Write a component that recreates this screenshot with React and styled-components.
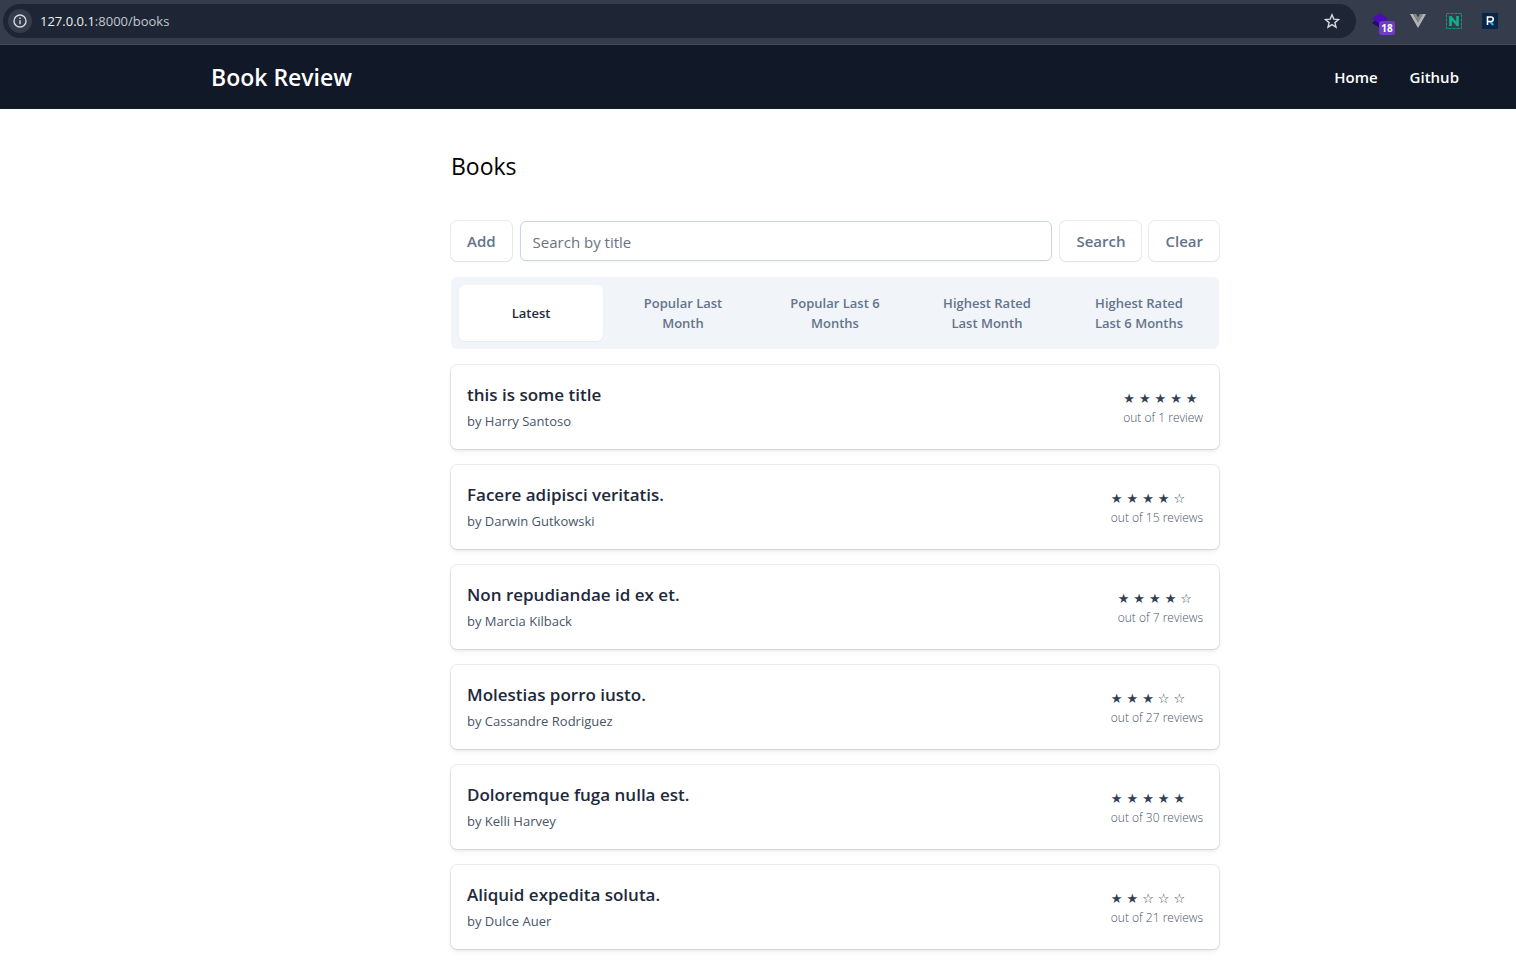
import React from "react";
import styled, { createGlobalStyle } from "styled-components";

const slate = {
  100: "#f1f5f9",
  300: "#cbd5e1",
  500: "#64748b",
  600: "#475569",
  700: "#334155",
  800: "#1e293b",
};

const GlobalStyle = createGlobalStyle`
  *, *::before, *::after { box-sizing: border-box; }
  body {
    margin: 0;
    background: #fff;
    color: #000;
    font-family: "Segoe UI", "Open Sans", "Noto Sans", sans-serif;
    font-size: 15px;
    line-height: 24px;
  }
  h1, h2, p, ul { margin: 0; padding: 0; }
  ul { list-style: none; }
  a { color: inherit; text-decoration: none; }
  button, input { font: inherit; }
`;

const BrowserBar = styled.div`
  display: flex;
  align-items: center;
  height: 45px;
  padding: 0 14px 2px 3px;
  gap: 14px;
  background: #353c4b;
  border-bottom: 1px solid #484b52;
`;

const AddressBar = styled.div`
  flex: 1;
  display: flex;
  align-items: center;
  height: 34px;
  padding: 0 14px 0 5px;
  gap: 8px;
  border-radius: 17px;
  background: #1e2636;
`;

const BarButton = styled.button`
  display: grid;
  place-items: center;
  flex: none;
  width: ${(p) => p.$size}px;
  height: ${(p) => p.$size}px;
  padding: 0;
  border: 0;
  border-radius: 50%;
  background: ${(p) => p.$fill || "transparent"};
  color: #d5d8de;
`;

const Address = styled.span`
  flex: 1;
  color: #c3c7cf;
  font-size: 13px;
  strong { color: #eceef2; font-weight: 400; }
`;

const Extensions = styled.div`
  display: flex;
  align-items: center;
  gap: 12px;
`;

const Extension = styled(BarButton)`
  position: relative;
  border-radius: 0;
`;

const Badge = styled.span`
  position: absolute;
  left: 9px;
  top: 12px;
  width: 16px;
  height: 14px;
  border-radius: 3px;
  background: #6f3cc3;
  color: #fff;
  font-size: 10px;
  font-weight: 700;
  line-height: 14px;
  text-align: center;
`;

const SiteHeader = styled.header`
  padding-left: 154px;
  background: #111827;
  color: #fff;
`;

const HeaderInner = styled.div`
  display: flex;
  align-items: center;
  justify-content: space-between;
  max-width: 1280px;
  height: 64px;
  margin: 0 auto;
  padding: 0 16px;
`;

const Brand = styled.a`
  font-size: 23px;
  font-weight: 600;
  line-height: 32px;
`;

const Nav = styled.nav`
  display: flex;
  gap: 32px;
  font-weight: 600;
`;

const Main = styled.main`
  padding: 40px 0 16px 154px;
`;

const Column = styled.div`
  max-width: 768px;
  margin: 0 auto;
`;

const PageTitle = styled.h1`
  margin-bottom: 38px;
  font-size: 23px;
  font-weight: 400;
  line-height: 34px;
`;

const SearchForm = styled.form`
  display: flex;
  gap: 8px;
  margin-bottom: 16px;
`;

const Button = styled.button`
  height: 40px;
  padding: 0 16px;
  border: 0;
  border-radius: 6px;
  background: #fff;
  box-shadow: 0 0 0 1px rgba(51, 65, 85, 0.1), 0 1px 2px rgba(0, 0, 0, 0.05);
  color: ${slate[500]};
  font-weight: 600;
`;

const SearchInput = styled.input`
  flex: 1;
  min-width: 0;
  height: 40px;
  padding: 2px 12px 0;
  border: 1px solid ${slate[300]};
  border-radius: 6px;
  box-shadow: 0 1px 2px rgba(0, 0, 0, 0.05);
  color: ${slate[700]};
  &::placeholder { color: #6b7280; opacity: 1; }
`;

const Filters = styled.nav`
  display: grid;
  grid-template-columns: repeat(5, 1fr);
  gap: 8px;
  margin-bottom: 16px;
  padding: 8px;
  border-radius: 6px;
  background: ${slate[100]};
`;

const Filter = styled.a`
  display: flex;
  align-items: center;
  justify-content: center;
  min-height: 56px;
  padding: 8px 24px;
  border-radius: 6px;
  background: ${(p) => (p.$active ? "#fff" : "transparent")};
  box-shadow: ${(p) => (p.$active ? "0 1px 2px rgba(0, 0, 0, 0.05)" : "none")};
  color: ${(p) => (p.$active ? slate[800] : slate[500])};
  font-size: 13px;
  font-weight: 600;
  line-height: 20px;
  text-align: center;
`;

const BookList = styled.ul`
  display: grid;
  gap: 16px;
`;

const BookCard = styled.li`
  display: flex;
  align-items: center;
  justify-content: space-between;
  padding: 16px;
  border-radius: 6px;
  background: #fff;
  box-shadow: 0 0 0 1px rgba(0, 0, 0, 0.07), 0 1px 3px rgba(0, 0, 0, 0.08),
    0 4px 6px -1px rgba(0, 0, 0, 0.06);
`;

const BookTitle = styled.h2`
  color: ${slate[800]};
  font-size: 17px;
  font-weight: 600;
  line-height: 28px;
`;

const Author = styled.p`
  color: ${slate[600]};
  font-size: 13px;
  line-height: 24px;
`;

const Stars = styled.div`
  display: flex;
  gap: 4px;
  color: ${slate[700]};
  font-family: "DejaVu Sans", sans-serif;
  font-size: 13px;
  line-height: 22px;
`;

const ReviewCount = styled.p`
  color: ${slate[600]};
  font-size: 12px;
  font-weight: 300;
  line-height: 16px;
`;

const filters = [
  "Latest",
  "Popular Last Month",
  "Popular Last 6 Months",
  "Highest Rated Last Month",
  "Highest Rated Last 6 Months",
];

const books = [
  { title: "this is some title", author: "Harry Santoso", rating: 5, reviews: 1 },
  { title: "Facere adipisci veritatis.", author: "Darwin Gutkowski", rating: 4, reviews: 15 },
  { title: "Non repudiandae id ex et.", author: "Marcia Kilback", rating: 4, reviews: 7 },
  { title: "Molestias porro iusto.", author: "Cassandre Rodriguez", rating: 3, reviews: 27 },
  { title: "Doloremque fuga nulla est.", author: "Kelli Harvey", rating: 5, reviews: 30 },
  { title: "Aliquid expedita soluta.", author: "Dulce Auer", rating: 2, reviews: 21 },
];

function Rating({ value }) {
  return (
    <Stars role="img" aria-label={`${value} of 5 stars`}>
      {[1, 2, 3, 4, 5].map((n) => (
        <span key={n}>{n <= value ? "★" : "☆"}</span>
      ))}
    </Stars>
  );
}

function Browser() {
  return (
    <BrowserBar>
      <AddressBar>
        <BarButton type="button" aria-label="Site information" $size={24} $fill="#353c4b">
          <svg width="14" height="14" viewBox="0 0 14 14" fill="none" stroke="currentColor" strokeWidth="1.4">
            <circle cx="7" cy="7" r="6" />
            <path d="M7 6.3v4M7 3.5v1.5" />
          </svg>
        </BarButton>
        <Address>
          <strong>127.0.0.1</strong>:8000/books
        </Address>
        <BarButton type="button" aria-label="Bookmark this page" $size={20}>
          <svg width="16" height="16" viewBox="0 0 16 16" fill="none" stroke="currentColor" strokeWidth="1.4">
            <path d="M8 1.8l1.8 4.3 4.7.4-3.6 3.1 1.1 4.6L8 11.7l-4 2.5 1.1-4.6L1.5 6.5l4.7-.4z" />
          </svg>
        </BarButton>
      </AddressBar>
      <Extensions>
        <Extension type="button" aria-label="Stack extension" $size={24}>
          <svg width="24" height="24" viewBox="0 0 24 24">
            <path d="M2 14l3-2.5 13 1L10 19z" fill="#230a72" />
            <path d="M2 9.5L10 4l8 5.5-8 5.5z" fill="#4c0ab8" />
          </svg>
          <Badge>18</Badge>
        </Extension>
        <Extension type="button" aria-label="Vue devtools" $size={24}>
          <svg width="16" height="16" viewBox="0 0 16 16">
            <path d="M0 1h3.2L8 9.2 12.8 1H16L8 15z" fill="#b4b4b4" />
            <path d="M3.2 1h3L8 4.2 9.8 1h3L8 9.4z" fill="#858585" />
          </svg>
        </Extension>
        <Extension type="button" aria-label="N extension" $size={24}>
          <svg width="16" height="16" viewBox="0 0 16 16" fill="none" stroke="#10b088">
            <rect x=".5" y=".5" width="15" height="15" strokeDasharray="3 1" opacity=".75" />
            <path d="M4.5 13V3M11.5 13V3M4.5 4l7 8" strokeWidth="2.6" />
          </svg>
        </Extension>
        <Extension type="button" aria-label="R extension" $size={24}>
          <svg width="16" height="16" viewBox="0 0 16 16" fill="none">
            <rect width="16" height="16" fill="#06264a" />
            <path d="M8 8.5l3.2 3.5" stroke="#35b3ee" strokeWidth="2" />
            <path d="M5.5 12V4H9a2 2 0 0 1 0 4.500H6" stroke="#fff" strokeWidth="1.6" />
          </svg>
        </Extension>
      </Extensions>
    </BrowserBar>
  );
}

export default function App() {
  return (
    <>
      <GlobalStyle />
      <Browser />
      <SiteHeader>
        <HeaderInner>
          <Brand href="#books">Book Review</Brand>
          <Nav>
            <a href="#home">Home</a>
            <a href="#github">Github</a>
          </Nav>
        </HeaderInner>
      </SiteHeader>
      <Main>
        <Column>
          <PageTitle>Books</PageTitle>
          <SearchForm onSubmit={(e) => e.preventDefault()}>
            <Button type="button">Add</Button>
            <SearchInput type="text" name="title" aria-label="Search by title" placeholder="Search by title" />
            <Button type="submit">Search</Button>
            <Button type="reset">Clear</Button>
          </SearchForm>
          <Filters aria-label="Sort books">
            {filters.map((label, i) => (
              <Filter key={label} href="#books" $active={i === 0}>
                {label}
              </Filter>
            ))}
          </Filters>
          <BookList>
            {books.map((b) => (
              <BookCard key={b.title}>
                <div>
                  <BookTitle>{b.title}</BookTitle>
                  <Author>by {b.author}</Author>
                </div>
                <div>
                  <Rating value={b.rating} />
                  <ReviewCount>
                    out of {b.reviews} {b.reviews === 1 ? "review" : "reviews"}
                  </ReviewCount>
                </div>
              </BookCard>
            ))}
          </BookList>
        </Column>
      </Main>
    </>
  );
}
